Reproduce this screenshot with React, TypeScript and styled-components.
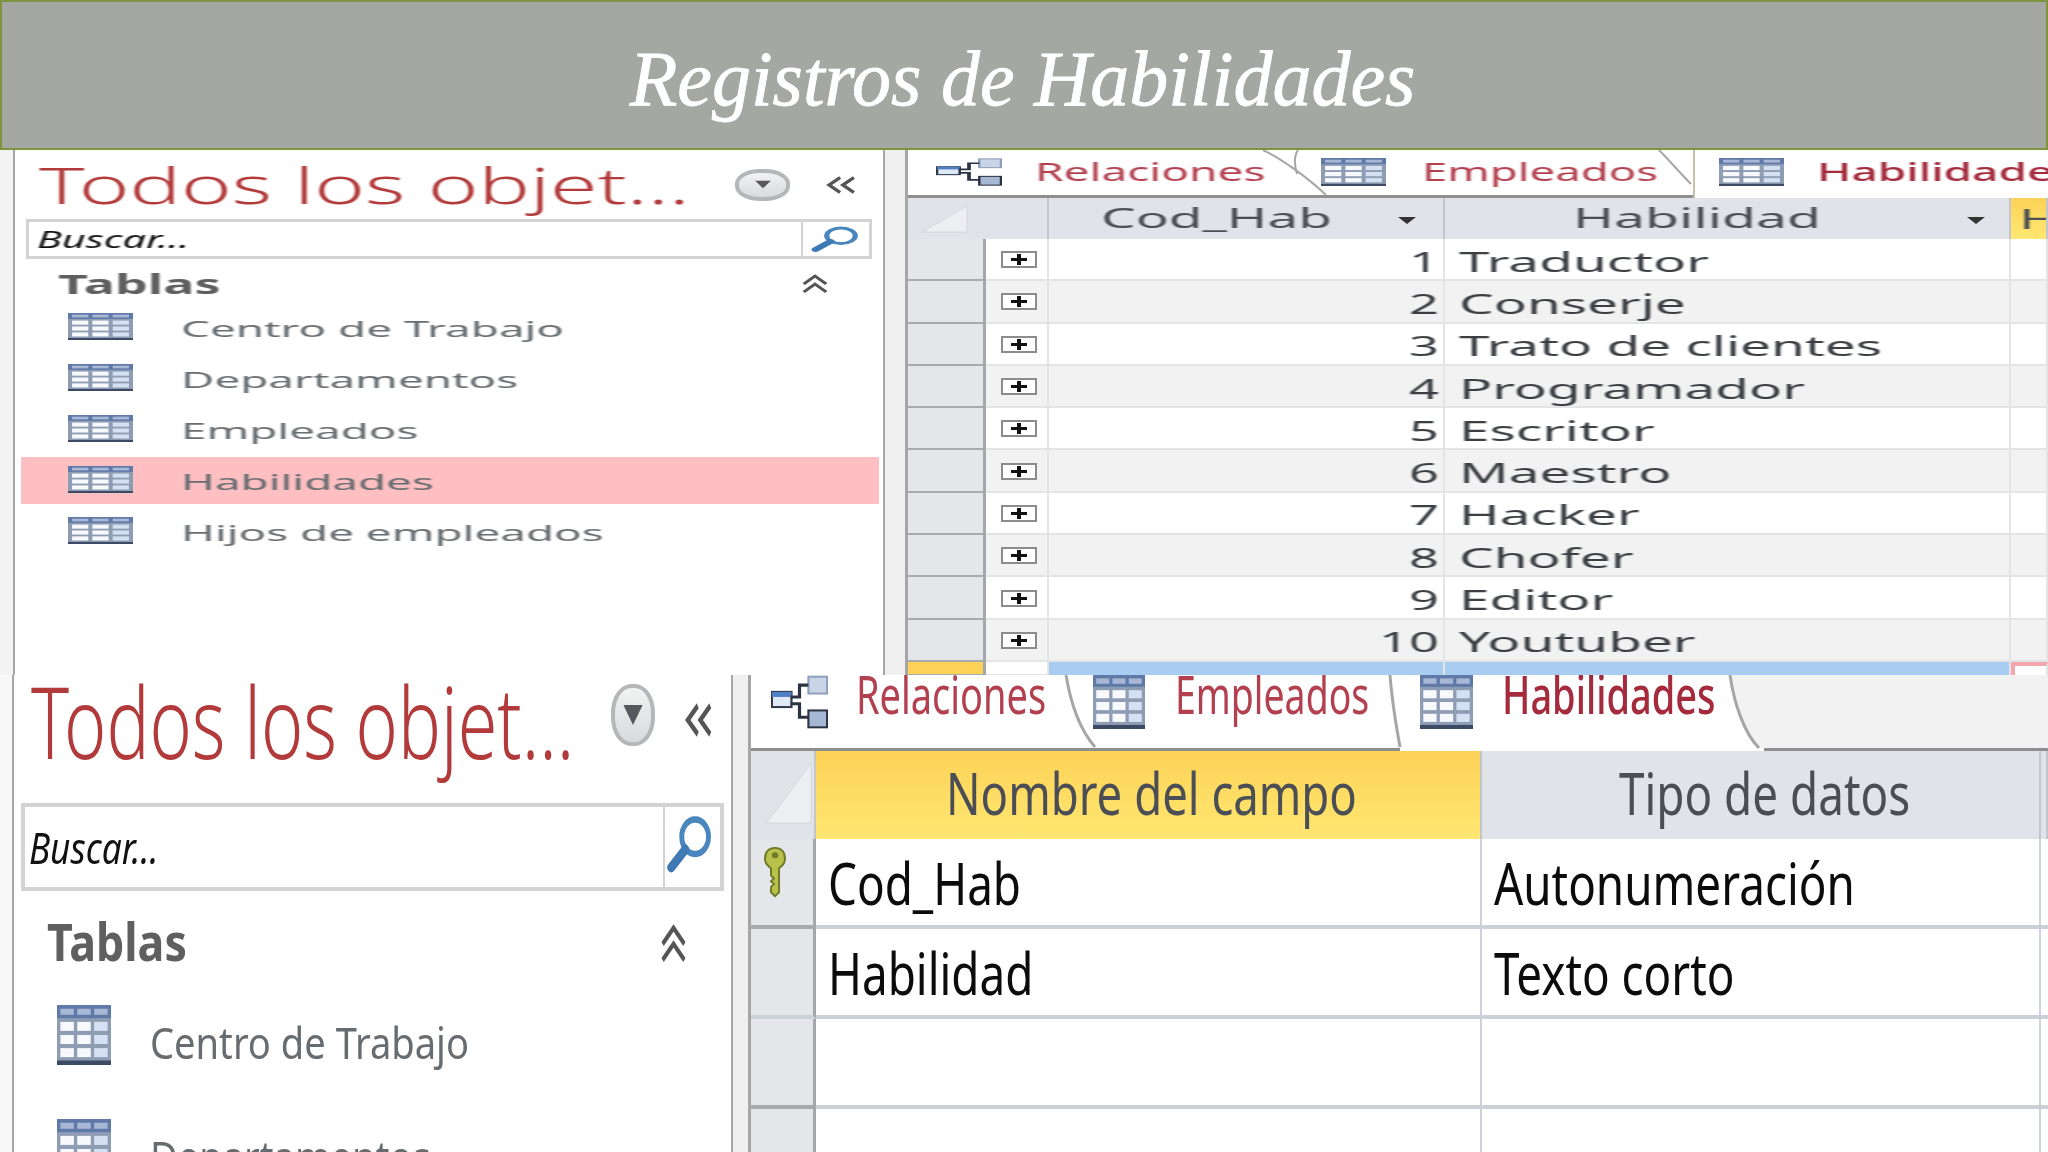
import styled, { createGlobalStyle } from "styled-components";

const GlobalStyle = createGlobalStyle`
  html, body {
    margin: 0;
    padding: 0;
    background: white;
  }
`;

const Page = styled.div`
  width: 2048px;
  height: 1152px;
  overflow: hidden;
  display: flex;
  flex-direction: column;
  font-family: "Noto Sans", "Open Sans", sans-serif;
`;

const Banner = styled.header`
  height: 150px;
  box-sizing: border-box;
  flex: none;
  padding-top: 7px;
  display: flex;
  align-items: center;
  justify-content: center;
  background: #a5a8a2;
  border: 2px solid #7f9440;
`;

const BannerTitle = styled.h1`
  margin: 0 0 0 -3px;
  font-family: "Liberation Serif", serif;
  font-style: italic;
  font-weight: 400;
  font-size: 78px;
  color: white;
  white-space: nowrap;
  -webkit-text-stroke: 0.8px white;
`;

const Shot = styled.section<{ $height: number; $navWidth: number; $gap: number; $edge: string }>`
  height: ${(p) => p.$height}px;
  flex: none;
  overflow: hidden;
  display: grid;
  grid-template-columns: ${(p) => p.$navWidth}px ${(p) => p.$gap}px 1fr;
  background: ${(p) => p.$edge};
`;

const Gutter = styled.div`
  background: #f0f0f0;
`;

const Stretch = styled.span<{ $x: number }>`
  display: inline-block;
  white-space: nowrap;
  transform: scaleX(${(p) => p.$x});
  transform-origin: left center;
  filter: blur(0.5px);
`;

/* navigation pane */
const Nav = styled.nav<{ $left: number }>`
  margin-left: ${(p) => p.$left}px;
  border-left: 2px solid #a6a6a6;
  border-right: 2px solid #a6a6a6;
  background: white;
  min-width: 0;
  overflow: hidden;
`;

const NavHead = styled.div<{ $height: number; $left: number; $bottom: number }>`
  height: ${(p) => p.$height}px;
  box-sizing: border-box;
  padding: 0 0 ${(p) => p.$bottom}px ${(p) => p.$left}px;
  display: flex;
  align-items: center;
`;

const NavTitle = styled.div<{ $size: number }>`
  flex: 1;
  min-width: 0;
  font-size: ${(p) => p.$size}px;
  font-weight: 300;
  line-height: 1;
  color: #b23a3a;
`;

const Pill = styled.div<{ $w: number; $h: number; $right: number; $lift: number }>`
  width: ${(p) => p.$w}px;
  height: ${(p) => p.$h}px;
  margin: 0 ${(p) => p.$right}px ${(p) => p.$lift}px 0;
  box-sizing: border-box;
  border: 4px solid #b4b6b8;
  border-radius: 46%;
  background: linear-gradient(#f2f2f2, #d8dadc);
  display: flex;
  align-items: center;
  justify-content: center;
`;

const ArrowSlot = styled.div<{ $w: number; $h: number; $right: number }>`
  width: ${(p) => p.$w}px;
  height: ${(p) => p.$h}px;
  margin-right: ${(p) => p.$right}px;
  flex: none;
  svg {
    display: block;
    width: 100%;
    height: 100%;
  }
`;

const SearchBox = styled.div<{ $height: number; $left: number; $right: number; $field: number; $border: number }>`
  height: ${(p) => p.$height}px;
  margin: 0 ${(p) => p.$right}px 0 ${(p) => p.$left}px;
  box-sizing: border-box;
  border: ${(p) => p.$border}px solid #d3d3d3;
  display: grid;
  grid-template-columns: ${(p) => p.$field}px 1fr;
  grid-template-rows: minmax(0, 1fr);
`;

const SearchField = styled.div<{ $size: number; $left: number }>`
  padding-left: ${(p) => p.$left}px;
  border-right: 2px solid #d3d3d3;
  display: flex;
  align-items: center;
  font-size: ${(p) => p.$size}px;
  font-style: italic;
  color: #111;
  overflow: hidden;
`;

const SearchIconSlot = styled.div<{ $inset: string }>`
  box-sizing: border-box;
  min-height: 0;
  padding: ${(p) => p.$inset};
  svg {
    display: block;
    width: 100%;
    height: 100%;
  }
`;

const GroupHead = styled.div<{ $height: number; $left: number; $size: number; $right: number; $top: number }>`
  height: ${(p) => p.$height}px;
  box-sizing: border-box;
  padding: ${(p) => p.$top}px ${(p) => p.$right}px 0 ${(p) => p.$left}px;
  display: flex;
  align-items: center;
  justify-content: space-between;
  font-size: ${(p) => p.$size}px;
  font-weight: 700;
  color: #5f5f5f;
`;

const NavItem = styled.div<{ $active?: boolean; $height: number; $left: number; $size: number }>`
  height: ${(p) => p.$height}px;
  margin: 4px 4px 4px 6px;
  padding-left: ${(p) => p.$left}px;
  display: flex;
  align-items: center;
  font-size: ${(p) => p.$size}px;
  color: #666c70;
  background: ${(p) => (p.$active ? "#fdbfc1" : "transparent")};
`;

const IconSlot = styled.div<{ $w: number; $h: number; $right: number; $lift?: number }>`
  width: ${(p) => p.$w}px;
  height: ${(p) => p.$h}px;
  margin: 0 ${(p) => p.$right}px ${(p) => p.$lift ?? 0}px 0;
  flex: none;
  svg {
    display: block;
    width: 100%;
    height: 100%;
  }
`;

/* object tabs */
const Workspace = styled.div`
  min-width: 0;
  overflow: hidden;
  border-left: 3px solid #a6a6a6;
  background: white;
`;

const TabStrip = styled.div<{ $height: number }>`
  height: ${(p) => p.$height}px;
  box-sizing: border-box;
  display: flex;
  border-bottom: 3px solid #8f8f8f;
`;

const Tab = styled.div<{ $width: number; $active?: boolean; $size: number; $pad: number; $top: number; $textLift?: number }>`
  position: relative;
  flex: none;
  box-sizing: border-box;
  width: ${(p) => p.$width}px;
  height: ${(p) => (p.$active ? "calc(100% + 3px)" : "100%")};
  padding: ${(p) => p.$top}px 0 0 ${(p) => p.$pad}px;
  display: flex;
  align-items: flex-start;
  background: white;
  font-size: ${(p) => p.$size}px;
  line-height: 1;
  color: ${(p) => (p.$active ? "#a42a3c" : "#b3404f")};
  font-weight: ${(p) => (p.$active ? 500 : 400)};
  ${Stretch} {
    margin-top: ${(p) => -(p.$textLift ?? 0)}px;
  }
`;

const TabEdge = styled.svg`
  position: absolute;
  top: 0;
  left: 100%;
  width: 1px;
  height: 1px;
  overflow: visible;
  z-index: 1;
`;

const TabLine = styled.div`
  position: absolute;
  top: 0;
  bottom: 0;
  left: 0;
  width: 2px;
  background: #c9bfae;
`;

const TabRest = styled.div`
  flex: 1;
  background: #f2f2f2;
`;

/* datasheet */
const SheetRow = styled.div<{ $columns: string; $height: number }>`
  height: ${(p) => p.$height}px;
  box-sizing: border-box;
  display: grid;
  grid-template-columns: ${(p) => p.$columns};
`;

const Corner = styled.div<{ $span?: number }>`
  grid-column: span ${(p) => p.$span ?? 1};
  background: #e0e3e8;
  border-right: 2px solid #c2c6cc;
  svg {
    display: block;
    width: 100%;
    height: 100%;
  }
`;

const HeadCell = styled.div<{ $selected?: boolean; $size: number; $indent: number; $bottom?: number }>`
  box-sizing: border-box;
  padding: 0 0 ${(p) => p.$bottom ?? 0}px ${(p) => p.$indent}px;
  display: flex;
  align-items: center;
  overflow: hidden;
  font-size: ${(p) => p.$size}px;
  color: #4b4f55;
  border-right: 2px solid #c2c6cc;
  background: ${(p) => (p.$selected ? "linear-gradient(#fdd257, #ffe772)" : "#e0e3e8")};
`;

const SortMark = styled.div<{ $left: number }>`
  position: absolute;
  left: ${(p) => p.$left}px;
  top: 19px;
  width: 0;
  height: 0;
  border-left: 9px solid transparent;
  border-right: 9px solid transparent;
  border-top: 7px solid #333;
`;

const HeadBox = styled(HeadCell)`
  position: relative;
`;

const RowHandle = styled.div<{ $current?: boolean }>`
  background: ${(p) => (p.$current ? "#fdd257" : "#e4e6e9")};
  border-right: 3px solid #a3a6aa;
  border-bottom: 2px solid #a8abae;
  box-sizing: border-box;
`;

const Expander = styled.div<{ $alt: boolean }>`
  display: flex;
  align-items: center;
  justify-content: center;
  padding: 1px 0 0 4px;
  background: ${(p) => (p.$alt ? "#f2f2f2" : "white")};
  border-right: 2px solid #e2e4e6;
  border-bottom: 2px solid #e2e4e6;
`;

const PlusBox = styled.div`
  width: 36px;
  height: 17px;
  box-sizing: border-box;
  border: 2px solid #8c8c8c;
  background: white;
  position: relative;
  &::before {
    content: "";
    position: absolute;
    left: 8px;
    right: 8px;
    top: 5px;
    height: 3px;
    background: #111;
  }
  &::after {
    content: "";
    position: absolute;
    left: 14px;
    top: 1px;
    width: 4px;
    height: 11px;
    background: #111;
  }
`;

const DataCell = styled.div<{ $alt?: boolean; $number?: boolean; $size: number }>`
  box-sizing: border-box;
  padding: ${(p) => (p.$number ? "3px 4px 0 0" : "3px 0 0 14px")};
  display: flex;
  align-items: center;
  justify-content: ${(p) => (p.$number ? "flex-end" : "flex-start")};
  overflow: hidden;
  font-size: ${(p) => p.$size}px;
  color: #3b3f44;
  background: ${(p) => (p.$alt ? "#f2f2f2" : "white")};
  border-right: 2px solid #e2e4e6;
  border-bottom: 2px solid #e2e4e6;
`;

const NumberText = styled(Stretch)`
  transform-origin: right center;
`;

const NewCell = styled.div<{ $end?: boolean }>`
  background: ${(p) => (p.$end ? "white" : "#a9cdf0")};
  border-right: 2px solid #e2e4e6;
  ${(p) => (p.$end ? "border-left: 4px solid #f4a6ad; border-top: 4px solid #f4a6ad;" : "")}
`;

const DesignHandle = styled.div<{ $strong?: boolean }>`
  display: flex;
  justify-content: center;
  padding: 7px 14px 0 0;
  box-sizing: border-box;
  background: #e4e6e9;
  border-right: 3px solid #a3a6aa;
  border-bottom: 4px solid ${(p) => (p.$strong ? "#a8abae" : "#ccd0d8")};
`;

const DesignCell = styled.div`
  box-sizing: border-box;
  padding-left: 12px;
  display: flex;
  align-items: center;
  overflow: hidden;
  font-size: 58px;
  color: #0c0c0c;
  border-right: 2px solid #ccd0d8;
  border-bottom: 4px solid #ccd0d8;
`;

const KeySlot = styled.div`
  width: 24px;
  height: 52px;
  svg {
    display: block;
    width: 100%;
    height: 100%;
  }
`;

function TableIcon() {
  return (
    <svg viewBox="0 0 16 16" preserveAspectRatio="none">
      <rect x="0" y="0" width="16" height="16" fill="#8f9db4" />
      <rect x="0" y="0" width="16" height="3.5" fill="#5f7aa8" />
      <rect x="1" y="1" width="4" height="1.6" fill="#a8b8d4" />
      <rect x="6" y="1" width="4" height="1.6" fill="#a8b8d4" />
      <rect x="11" y="1" width="4" height="1.6" fill="#a8b8d4" />
      {[4.5, 8, 11.5].map((y) =>
        [1, 6, 11].map((x) => (
          <rect key={`${x}-${y}`} x={x} y={y} width="4" height="2.4" fill={x === 11 ? "#d5e0f2" : "#f7f9fc"} />
        ))
      )}
      <rect x="0" y="14.8" width="16" height="1.2" fill="#3d4a66" />
    </svg>
  );
}

function RelationsIcon() {
  return (
    <svg viewBox="0 0 32 32" preserveAspectRatio="none">
      <rect x="0.5" y="10" width="11" height="9" fill="#dfe8f5" stroke="#30384a" strokeWidth="1.2" />
      <rect x="0.5" y="10" width="11" height="3" fill="#4f7fc4" />
      <rect x="21" y="1" width="10.5" height="10" fill="#c9d4e6" stroke="#8fa0bc" strokeWidth="1.2" />
      <rect x="21" y="21" width="10.5" height="10" fill="#a6b8d4" stroke="#2c3444" strokeWidth="1.2" />
      <path d="M11 13 H16 V6 H21 M11 17 H16 V25 H21" fill="none" stroke="#2c3444" strokeWidth="1.8" />
    </svg>
  );
}

function SearchIcon() {
  return (
    <svg viewBox="0 0 32 32" preserveAspectRatio="none">
      <circle cx="20" cy="12" r="9.5" fill="white" stroke="#4a86be" strokeWidth="3.5" />
      <path d="M13 19 L3 29" stroke="#3f7ab4" strokeWidth="5.5" strokeLinecap="round" />
    </svg>
  );
}

function DoubleLeft() {
  return (
    <svg viewBox="0 0 24 16" preserveAspectRatio="none">
      <path d="M11 2 L3 8 L11 14 M21 2 L13 8 L21 14" fill="none" stroke="#555" strokeWidth="2.6" />
    </svg>
  );
}

function DoubleUp() {
  return (
    <svg viewBox="0 0 24 20" preserveAspectRatio="none">
      <path d="M3 10 L12 2 L21 10 M3 18 L12 10 L21 18" fill="none" stroke="#555" strokeWidth="2.8" />
    </svg>
  );
}

function DropMark({ w, h }: { w: number; h: number }) {
  return (
    <svg width={w} height={h} viewBox="0 0 16 12" preserveAspectRatio="none">
      <path d="M1 1 H15 L8 11 Z" fill="#55585c" />
    </svg>
  );
}

function Key() {
  return (
    <svg viewBox="0 0 12 28" preserveAspectRatio="none">
      <path d="M6 1 C9 1 11 3 11 7 C11 10 9 11 8 12 V25 L6 27 L4 25 V22 L5.5 20.5 L4 19 L5.5 17.5 L4 16 V12 C3 11 1 10 1 7 C1 3 3 1 6 1 Z" fill="#b8c24a" stroke="#6f7a2a" strokeWidth="1" />
      <circle cx="6" cy="5" r="1.6" fill="#6f7a2a" />
    </svg>
  );
}

const skills = ["Traductor", "Conserje", "Trato de clientes", "Programador", "Escritor", "Maestro", "Hacker", "Chofer", "Editor", "Youtuber"];
const tables = ["Centro de Trabajo", "Departamentos", "Empleados", "Habilidades", "Hijos de empleados"];
const topColumns = "78px 63px 396px 566px 1fr";
const lowColumns = "65px 666px 559px 1fr";

export default function App() {
  return (
    <Page>
      <GlobalStyle />
      <Banner>
        <BannerTitle>Registros de Habilidades</BannerTitle>
      </Banner>

      <Shot $height={525} $navWidth={885} $gap={20} $edge="#f3f3f3">
        <Nav $left={13}>
          <NavHead $height={69} $left={24} $bottom={0}>
            <NavTitle $size={50}>
              <Stretch $x={1.72}>Todos los objet...</Stretch>
            </NavTitle>
            <Pill $w={55} $h={32} $right={35} $lift={0}>
              <DropMark w={18} h={9} />
            </Pill>
            <ArrowSlot $w={33} $h={20} $right={25}>
              <DoubleLeft />
            </ArrowSlot>
          </NavHead>
          <SearchBox $height={40} $left={11} $right={11} $field={774} $border={3}>
            <SearchField $size={23} $left={8}>
              <Stretch $x={1.8}>Buscar...</Stretch>
            </SearchField>
            <SearchIconSlot $inset="4px 10px 4px 8px">
              <SearchIcon />
            </SearchIconSlot>
          </SearchBox>
          <GroupHead $height={41} $left={43} $right={53} $size={26} $top={8}>
            <Stretch $x={2}>Tablas</Stretch>
            <IconSlot $w={30} $h={20} $right={0}>
              <DoubleUp />
            </IconSlot>
          </GroupHead>
          {tables.map((name) => (
            <NavItem key={name} $active={name === "Habilidades"} $height={47} $left={47} $size={22}>
              <IconSlot $w={65} $h={27} $right={48} $lift={3}>
                <TableIcon />
              </IconSlot>
              <Stretch $x={2.08}>{name}</Stretch>
            </NavItem>
          ))}
        </Nav>
        <Gutter />
        <Workspace>
          <TabStrip $height={48}>
            <Tab $width={392} $size={26} $pad={28} $top={8}>
              <IconSlot $w={66} $h={28} $right={33}>
                <RelationsIcon />
              </IconSlot>
              <Stretch $x={1.77}>Relaciones</Stretch>
              <TabEdge>
                <path d="M-37 0 C-20 8 6 26 26 45" fill="none" stroke="#a6a6a6" strokeWidth="2" />
                <path d="M-2 0 C-6 6 -6 14 -3 24" fill="none" stroke="#a6a6a6" strokeWidth="2" />
              </TabEdge>
            </Tab>
            <Tab $width={393} $size={26} $pad={21} $top={8}>
              <IconSlot $w={65} $h={28} $right={36}>
                <TableIcon />
              </IconSlot>
              <Stretch $x={1.75}>Empleados</Stretch>
              <TabEdge>
                <path d="M-34 0 C-24 10 -12 24 -2 34" fill="none" stroke="#a6a6a6" strokeWidth="2" />
              </TabEdge>
            </Tab>
            <Tab $width={400} $active $size={26} $pad={26} $top={8}>
              <TabLine />
              <IconSlot $w={65} $h={28} $right={33}>
                <TableIcon />
              </IconSlot>
              <Stretch $x={1.77}>Habilidades</Stretch>
            </Tab>
          </TabStrip>
          <SheetRow $columns={topColumns} $height={41}>
            <Corner $span={2}>
              <svg viewBox="0 0 141 41" preserveAspectRatio="none">
                <path d="M14 34 L60 8 V34 Z" fill="#eceef1" stroke="#d3d6da" />
              </svg>
            </Corner>
            <HeadBox $size={27} $indent={52} $bottom={2}>
              <Stretch $x={2.03}>Cod_Hab</Stretch>
              <SortMark $left={349} />
            </HeadBox>
            <HeadBox $size={27} $indent={128} $bottom={2}>
              <Stretch $x={2.05}>Habilidad</Stretch>
              <SortMark $left={522} />
            </HeadBox>
            <HeadCell $selected $size={27} $indent={8}>
              <Stretch $x={2.05}>Hijos</Stretch>
            </HeadCell>
          </SheetRow>
          {skills.map((skill, i) => (
            <SheetRow key={skill} $columns={topColumns} $height={42.3}>
              <RowHandle />
              <Expander $alt={i % 2 === 1}>
                <PlusBox />
              </Expander>
              <DataCell $alt={i % 2 === 1} $number $size={28}>
                <NumberText $x={1.87}>{i + 1}</NumberText>
              </DataCell>
              <DataCell $alt={i % 2 === 1} $size={28}>
                <Stretch $x={1.96}>{skill}</Stretch>
              </DataCell>
              <DataCell $alt={i % 2 === 1} $size={28} />
            </SheetRow>
          ))}
          <SheetRow $columns={topColumns} $height={14}>
            <RowHandle $current />
            <Expander $alt={false} />
            <NewCell />
            <NewCell />
            <NewCell $end />
          </SheetRow>
        </Workspace>
      </Shot>

      <Shot $height={477} $navWidth={733} $gap={15} $edge="#f8f8f8">
        <Nav $left={12}>
          <NavHead $height={128} $left={17} $bottom={38}>
            <NavTitle $size={100}>
              <Stretch $x={0.718}>Todos los objet...</Stretch>
            </NavTitle>
            <Pill $w={44} $h={62} $right={29} $lift={10}>
              <DropMark w={22} h={24} />
            </Pill>
            <ArrowSlot $w={30} $h={38} $right={17}>
              <DoubleLeft />
            </ArrowSlot>
          </NavHead>
          <SearchBox $height={88} $left={7} $right={7} $field={640} $border={4}>
            <SearchField $size={44} $left={4}>
              <Stretch $x={0.8}>Buscar...</Stretch>
            </SearchField>
            <SearchIconSlot $inset="8px 8px 14px 2px">
              <SearchIcon />
            </SearchIconSlot>
          </SearchBox>
          <GroupHead $height={92} $left={33} $right={43} $size={52} $top={6}>
            <Stretch $x={0.86}>Tablas</Stretch>
            <IconSlot $w={29} $h={40} $right={0} $lift={-8}>
              <DoubleUp />
            </IconSlot>
          </GroupHead>
          {tables.slice(0, 2).map((name) => (
            <NavItem key={name} $height={110} $left={37} $size={44}>
              <IconSlot $w={54} $h={60} $right={39} $lift={14}>
                <TableIcon />
              </IconSlot>
              <Stretch $x={0.866}>{name}</Stretch>
            </NavItem>
          ))}
        </Nav>
        <Gutter />
        <Workspace>
          <TabStrip $height={76}>
            <Tab $width={334} $size={52} $pad={20} $top={0} $textLift={7}>
              <IconSlot $w={57} $h={54} $right={28}>
                <RelationsIcon />
              </IconSlot>
              <Stretch $x={0.73}>Relaciones</Stretch>
              <TabEdge>
                <path d="M-19 0 C-14 30 -4 56 10 72" fill="none" stroke="#a6a6a6" strokeWidth="3" />
              </TabEdge>
            </Tab>
            <Tab $width={315} $size={52} $pad={8} $top={0} $textLift={7}>
              <IconSlot $w={52} $h={54} $right={30}>
                <TableIcon />
              </IconSlot>
              <Stretch $x={0.72}>Empleados</Stretch>
              <TabEdge>
                <path d="M-10 0 C-8 26 -4 50 0 72" fill="none" stroke="#a6a6a6" strokeWidth="3" />
              </TabEdge>
            </Tab>
            <Tab $width={364} $active $size={52} $pad={20} $top={0} $textLift={7}>
              <IconSlot $w={53} $h={54} $right={29}>
                <TableIcon />
              </IconSlot>
              <Stretch $x={0.73}>Habilidades</Stretch>
              <TabEdge>
                <path d="M-34 0 C-30 28 -20 58 -5 73 L0 73 V0 Z" fill="#f2f2f2" />
                <path d="M-34 0 C-30 28 -20 58 -5 73" fill="none" stroke="#a6a6a6" strokeWidth="3" />
              </TabEdge>
            </Tab>
            <TabRest />
          </TabStrip>
          <SheetRow $columns={lowColumns} $height={88}>
            <Corner>
              <svg viewBox="0 0 65 88" preserveAspectRatio="none">
                <path d="M16 72 L62 12 V72 Z" fill="#eceef1" stroke="#d3d6da" />
              </svg>
            </Corner>
            <HeadCell $selected $size={58} $indent={130} $bottom={6}>
              <Stretch $x={0.785}>Nombre del campo</Stretch>
            </HeadCell>
            <HeadCell $size={58} $indent={137} $bottom={6}>
              <Stretch $x={0.79}>Tipo de datos</Stretch>
            </HeadCell>
            <HeadCell $size={58} $indent={0} />
          </SheetRow>
          {[
            ["Cod_Hab", "Autonumeración"],
            ["Habilidad", "Texto corto"],
            ["", ""],
            ["", ""],
          ].map(([field, type], i) => (
            <SheetRow key={i} $columns={lowColumns} $height={90}>
              <DesignHandle $strong={i % 2 === 0}>
                {i === 0 && (
                  <KeySlot>
                    <Key />
                  </KeySlot>
                )}
              </DesignHandle>
              <DesignCell>
                <Stretch $x={0.79}>{field}</Stretch>
              </DesignCell>
              <DesignCell>
                <Stretch $x={0.79}>{type}</Stretch>
              </DesignCell>
              <DesignCell />
            </SheetRow>
          ))}
        </Workspace>
      </Shot>
    </Page>
  );
}
